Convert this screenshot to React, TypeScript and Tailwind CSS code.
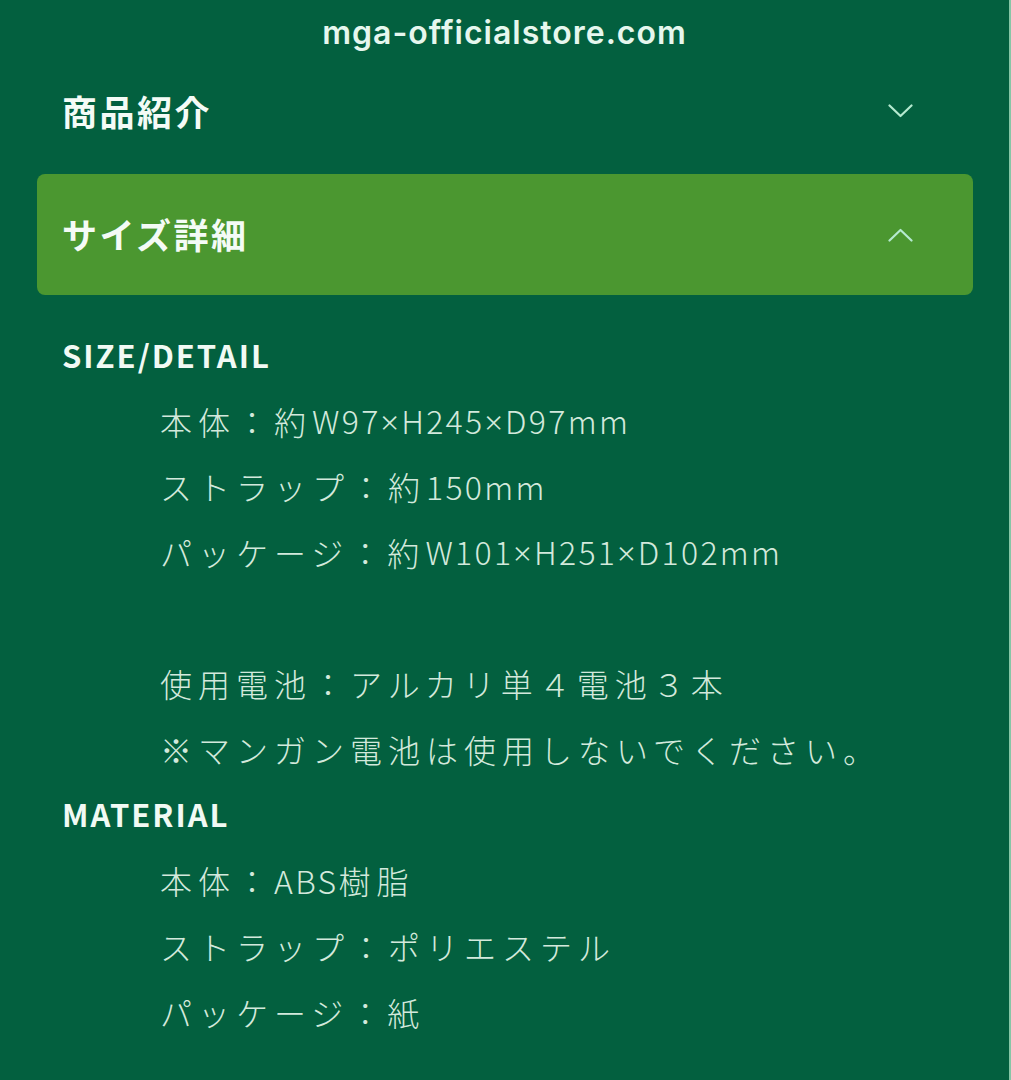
import React from "react";

const jp = { fontFamily: '"Noto Sans CJK JP", "Noto Sans", sans-serif' };

function Chevron({ up }: { up?: boolean }) {
  return (
    <svg width="25" height="14" viewBox="0 0 25 14" fill="none">
      {up ? (
        <polyline points="1.5,12.5 12.5,2 23.5,12.5" stroke="#b5ead0" strokeWidth="2.2" strokeLinecap="round" strokeLinejoin="round" />
      ) : (
        <polyline points="1.5,1.5 12.5,12 23.5,1.5" stroke="#b5ead0" strokeWidth="2.2" strokeLinecap="round" strokeLinejoin="round" />
      )}
    </svg>
  );
}

function runs(s: string) {
  const parts = s.split(/([A-Za-z0-9×]+)/).filter((p) => p.length > 0);
  return parts.map((p, i) => {
    if (/^[A-Za-z0-9×]+$/.test(p)) {
      return (
        <span key={i} className="tracking-[2.3px]">
          {p.split(/(×)/).map((q, j) =>
            q === "×" ? (
              <span key={j} style={{ fontFamily: '"Noto Sans", sans-serif' }}>×</span>
            ) : (
              <React.Fragment key={j}>{q}</React.Fragment>
            )
          )}
        </span>
      );
    }
    return (
      <span key={i} className="tracking-[6px]">
        {p}
      </span>
    );
  });
}

const Line = ({ text }: { text?: string }) => (
  <div className="h-[65.7px] flex items-center pl-[98px] text-[32px] font-light text-[#d3e9dc] whitespace-nowrap">
    {text ? runs(text) : null}
  </div>
);

const Heading = ({ children }: { children: React.ReactNode }) => (
  <div className="h-[65.7px] flex items-center text-[31px] font-bold tracking-[2px] text-[#f1faf4]">
    {children}
  </div>
);

export default function App() {
  return (
    <div className="w-[1011px] h-[1080px] bg-[#03603f] overflow-hidden flex border-r-2 border-[#86c6a6]" style={jp}>
      <div className="flex-1 flex flex-col">
        <div className="h-[66px] flex items-center justify-center text-[#e6f7ee] text-[32px] font-semibold tracking-[1px]" style={{ fontFamily: 'Inter, Roboto, "Liberation Sans", sans-serif' }}>
          mga-officialstore.com
        </div>
        <div className="h-[90px] flex items-center justify-between pl-[62px] pr-[96px]">
          <span className="text-[35px] font-bold tracking-[2.5px] text-[#f4fbf6]">商品紹介</span>
          <Chevron />
        </div>
        <div className="mt-[18px] ml-[37px] mr-[36px] h-[121px] rounded-[8px] bg-[#4b9730] flex items-center justify-between pl-[25px] pr-[60px]">
          <span className="text-[35px] font-bold tracking-[2.5px] text-[#f4fbf6]">サイズ詳細</span>
          <Chevron up />
        </div>
        <div className="pt-[27px] pl-[62px] flex flex-col">
          <Heading>SIZE/DETAIL</Heading>
          <Line text="本体：約W97×H245×D97mm" />
          <Line text="ストラップ：約150mm" />
          <Line text="パッケージ：約W101×H251×D102mm" />
          <Line />
          <Line text="使用電池：アルカリ単４電池３本" />
          <Line text="※マンガン電池は使用しないでください。" />
          <Heading>MATERIAL</Heading>
          <Line text="本体：ABS樹脂" />
          <Line text="ストラップ：ポリエステル" />
          <Line text="パッケージ：紙" />
        </div>
      </div>
    </div>
  );
}
